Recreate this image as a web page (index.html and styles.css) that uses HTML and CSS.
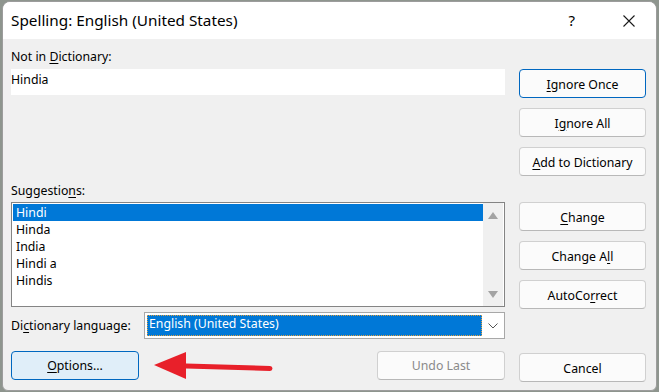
FILE: index.html
```html
<!DOCTYPE html>
<html lang="en">

<head>
    <meta charset="UTF-8">
    <title>Spelling: English (United States)</title>
    <link rel="stylesheet" href="styles.css">
</head>

<body>

    <div class="window">
        <!-- Title bar -->
        <div class="titlebar">
            <span class="title">Spelling: English (United States)</span>
            <span class="help">?</span>
            <svg class="close" width="12" height="12" viewBox="0 0 12 12">
                <path d="M0.5 0.5 L11.5 11.5 M11.5 0.5 L0.5 11.5" stroke="#1a1a1a" stroke-width="1.1" fill="none"/>
            </svg>
        </div>

        <div class="content">
            <!-- Left side -->
            <div class="left">
                <div class="label first">Not in <u>D</u>ictionary:</div>
                <div class="textbox">Hindia</div>

                <div class="label suggest">Suggestio<u>n</u>s:</div>
                <div class="listbox">
                    <div class="items">
                        <div class="item selected">Hindi</div>
                        <div class="item">Hinda</div>
                        <div class="item">India</div>
                        <div class="item">Hindi a</div>
                        <div class="item">Hindis</div>
                    </div>
                    <div class="scrollbar">
                        <svg width="12" height="10" viewBox="0 0 12 10"><path d="M1 9 L6 2 L11 9 Z" fill="#a3a3a3"/></svg>
                        <svg width="12" height="10" viewBox="0 0 12 10"><path d="M1 1 L6 8 L11 1 Z" fill="#a3a3a3"/></svg>
                    </div>
                </div>

                <div class="lang-row">
                    <div class="label">Di<u>c</u>tionary language:</div>
                    <div class="combo">
                        <div class="combo-value"><span>English (United States)</span></div>
                        <div class="combo-btn">
                            <svg width="10" height="6" viewBox="0 0 10 6"><path d="M0.5 0.5 L5 5 L9.5 0.5" stroke="#555" stroke-width="1" fill="none"/></svg>
                        </div>
                    </div>
                </div>

                <div class="bottom-row">
                    <button class="btn options"><u>O</u>ptions...</button>
                    <svg class="arrow" width="122" height="30" viewBox="0 0 122 30">
                        <path d="M32 14 L116 16.5" stroke="#e8202a" stroke-width="5" stroke-linecap="round"/>
                        <path d="M0 13 L32 0 L32 27 Z" fill="#e8202a"/>
                    </svg>
                    <button class="btn disabled">Undo Last</button>
                </div>
            </div>

            <!-- Right side -->
            <div class="right">
                <button class="btn default"><u>I</u>gnore Once</button>
                <button class="btn">I<u>g</u>nore All</button>
                <button class="btn"><u>A</u>dd to Dictionary</button>
                <button class="btn change"><u>C</u>hange</button>
                <button class="btn">Change A<u>l</u>l</button>
                <button class="btn">AutoCo<u>r</u>rect</button>
                <button class="btn cancel">Cancel</button>
            </div>
        </div>
    </div>

</body>

</html>
```

FILE: styles.css
```css
body {
    margin: 0;
    padding: 1px 0 0 2px;
    width: 659px;
    height: 392px;
    box-sizing: border-box;
    background-color: #8e958e;
    font-family: 'Noto Sans', 'Open Sans', sans-serif;
    font-size: 12.3px;
    color: #000;
    overflow: hidden;
}

.window {
    width: 655px;
    height: 390px;
    box-sizing: border-box;
    background-color: #f0f0f0;
    border: 1px solid #9c9c9c;
    border-radius: 8px 8px 6px 6px;
    overflow: hidden;
}

/* Title bar */
.titlebar {
    height: 37px;
    background-color: #fff;
    display: flex;
    align-items: center;
    padding-left: 8px;
}

.title {
    font-size: 15.3px;
    flex: 1;
    margin-top: -1px;
}

.help {
    font-size: 15px;
    margin-right: 48px;
    margin-top: -1px;
}

.close {
    margin-right: 21px;
}

/* Main area */
.content {
    display: flex;
    gap: 14px;
    padding: 0 9px 9px 8px;
    height: 352px;
    box-sizing: border-box;
}

.left {
    width: 494px;
    display: flex;
    flex-direction: column;
}

.label {
    line-height: 16px;
}

u {
    text-underline-offset: 2px;
}

.label.first {
    margin-top: 10px;
}

.textbox {
    margin-top: 4px;
    height: 26px;
    background-color: #fff;
    padding: 3px 0 0 0;
    box-sizing: border-box;
    line-height: 16px;
}

.label.suggest {
    margin-top: 88px;
}

.listbox {
    margin-top: 3px;
    height: 105px;
    border: 1px solid #848484;
    background-color: #fff;
    box-sizing: border-box;
    display: flex;
}

.items {
    flex: 1;
    padding: 1px 0 0 1px;
}

.item {
    height: 17px;
    line-height: 17px;
    padding-left: 3px;
}

.item.selected {
    background-color: #0078d7;
    color: #fff;
}

.scrollbar {
    width: 20px;
    background-color: #f0f0f0;
    display: flex;
    flex-direction: column;
    justify-content: space-between;
    align-items: center;
    padding: 7px 0 6px;
    margin-right: 1px;
}

.lang-row {
    margin-top: 5px;
    display: flex;
    align-items: center;
    justify-content: space-between;
}

.combo {
    width: 361px;
    height: 27px;
    box-sizing: border-box;
    border: 1px solid #a8a8a8;
    background-color: #fff;
    display: flex;
    padding: 2px 1px 2px 2px;
}

.combo-value {
    flex: 1;
    background-color: #0078d7;
    color: #fff;
    border: 1px dotted #e0a040;
    line-height: 16px;
    padding-left: 1px;
}

.combo-btn {
    width: 21px;
    display: flex;
    align-items: center;
    justify-content: center;
}

.bottom-row {
    margin-top: auto;
    display: flex;
    align-items: center;
}

.arrow {
    margin-left: 15px;
    margin-top: 4px;
}

.bottom-row .disabled {
    margin-left: auto;
}

/* Buttons */
.btn {
    width: 128px;
    height: 29px;
    box-sizing: border-box;
    font-family: inherit;
    font-size: 12.3px;
    color: #000;
    background-color: #fbfbfb;
    border: 1px solid #d0d0d0;
    border-bottom-color: #b8b8b8;
    border-radius: 4px;
    padding: 1px 0 0 0;
}

.btn.default {
    border-color: #0067c0;
}

.btn.options {
    background-color: #e0eef9;
    border-color: #0067c0;
}

.btn.disabled {
    color: #8a8a8a;
}

.right {
    width: 127px;
    display: flex;
    flex-direction: column;
    gap: 10px;
    padding-top: 30px;
}

.right .btn {
    width: 127px;
}

.right .change {
    margin-top: 16px;
}

.right .cancel {
    margin-top: auto;
}
```
